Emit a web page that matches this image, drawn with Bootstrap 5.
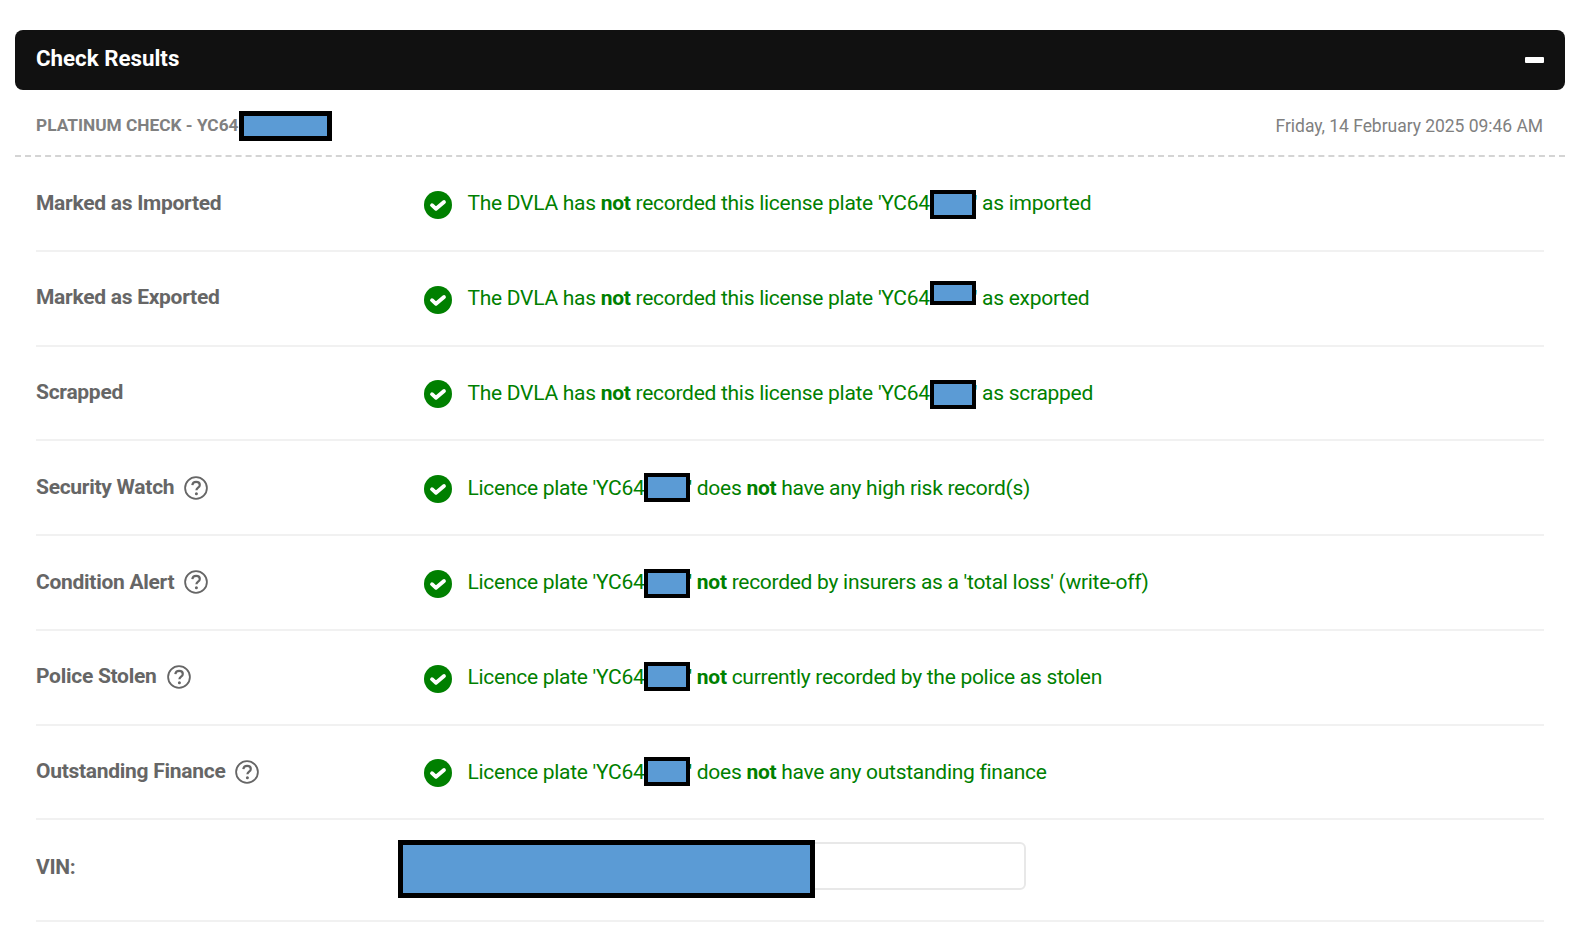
<!DOCTYPE html>
<html lang="en">
<head>
  <meta charset="UTF-8" />
  <meta name="viewport" content="width=device-width, initial-scale=1.0"/>
  <title>Check Results</title>
  <link href="https://cdn.jsdelivr.net/npm/bootstrap@5.3.0/dist/css/bootstrap.min.css" rel="stylesheet"/>
  <style>
    body {
      font-family: Roboto, "Liberation Sans", sans-serif;
      background: #fff;
      padding: 30px 15px 0 15px;
    }
    .results-bar {
      height: 60px;
      padding: 0 21px;
      background: #111;
      border-radius: 8px;
      color: #fff;
      font-size: 22.3px;
      font-weight: 700;
    }
    .results-title { margin-bottom: 2px; }
    .collapse-dash { width: 19px; height: 6px; background: #fff; border-radius: 1px; }
    .check-head {
      height: 67px;
      padding: 7px 22px 0 21px;
      border-bottom: 2px dashed #d4d4d4;
      color: #808080;
    }
    .check-title { font-size: 17.3px; font-weight: 700; }
    .check-date { font-size: 17.5px; letter-spacing: -0.04px; }
    .result-list { padding: 0 21px; }
    .result-row {
      height: 94.75px;
      border-bottom: 2px solid #f1f1f1;
    }
    .result-label {
      width: 388px;
      flex: none;
      font-size: 21px;
      font-weight: 700;
      color: #666;
      letter-spacing: -0.28px;
    }
    .help-icon { width: 24px; height: 24px; margin-left: 10px; }
    .tick-icon { width: 28px; height: 28px; flex: none; margin: 3px 16px 0 0; }
    .result-text { font-size: 21px; color: #008000; line-height: 30px; letter-spacing: -0.28px; margin-left: -0.5px; }
    .redact {
      display: inline-block;
      position: relative;
      z-index: 1;
      width: 46px;
      height: 29px;
      margin: -8px 0;
      vertical-align: middle;
      background: #5b9bd5;
      border: 4px solid #000;
    }
    .redact-short { height: 24px; vertical-align: 8px; }
    .redact-up { top: -2px; }
    .redact-head { width: 93px; height: 30px; border-width: 5px; }
    .apos { margin-left: -2px; }
    .vin-row { height: 101.5px; }
    .vin-label { width: 362px; margin-bottom: 4px; }
    .vin-field {
      width: 628px;
      height: 48px;
      margin-bottom: 9px;
      position: relative;
      border: 2px solid #e8e8e8;
      border-radius: 6px;
    }
    .redact-vin {
      position: absolute;
      left: -2px;
      top: -4px;
      width: 417px;
      height: 58px;
      margin: 0;
      border-width: 5px;
    }
  </style>
</head>
<body>
  <svg class="d-none">
    <symbol id="tick" viewBox="0 0 28 28">
      <circle cx="14" cy="14" r="14" fill="#008000"/>
      <path d="M8 14.2l4 3.6 8-6.8" fill="none" stroke="#fff" stroke-width="3.8" stroke-linecap="round" stroke-linejoin="round"/>
    </symbol>
    <symbol id="help" viewBox="0 0 24 24">
      <circle cx="12" cy="12" r="10.9" fill="none" stroke="#666" stroke-width="1.8"/>
      <path d="M8.3 9.2c.3-2.2 1.9-3.4 3.8-3.4 2.2 0 3.7 1.4 3.7 3.1 0 2.8-3.4 2.7-3.4 5.4" fill="none" stroke="#666" stroke-width="2.2"/>
      <circle cx="12.4" cy="17.8" r="1.5" fill="#666"/>
    </symbol>
  </svg>

  <div class="results-bar d-flex align-items-center justify-content-between">
    <span class="results-title">Check Results</span>
    <span class="collapse-dash"></span>
  </div>

  <div class="check-head d-flex align-items-center justify-content-between">
    <span class="check-title">PLATINUM CHECK - YC64<span class="redact redact-head"></span></span>
    <span class="check-date">Friday, 14 February 2025 09:46 AM</span>
  </div>

  <div class="result-list">
    <div class="result-row d-flex align-items-center">
      <div class="result-label">Marked as Imported</div>
      <svg class="tick-icon"><use href="#tick"/></svg>
      <div class="result-text">The DVLA has <b>not</b> recorded this license plate 'YC64<span class="redact"></span><span class="apos">'</span> as imported</div>
    </div>
    <div class="result-row d-flex align-items-center">
      <div class="result-label">Marked as Exported</div>
      <svg class="tick-icon"><use href="#tick"/></svg>
      <div class="result-text">The DVLA has <b>not</b> recorded this license plate 'YC64<span class="redact redact-short"></span><span class="apos">'</span> as exported</div>
    </div>
    <div class="result-row d-flex align-items-center">
      <div class="result-label">Scrapped</div>
      <svg class="tick-icon"><use href="#tick"/></svg>
      <div class="result-text">The DVLA has <b>not</b> recorded this license plate 'YC64<span class="redact"></span><span class="apos">'</span> as scrapped</div>
    </div>
    <div class="result-row d-flex align-items-center">
      <div class="result-label d-flex align-items-center">Security Watch
        <svg class="help-icon"><use href="#help"/></svg>
      </div>
      <svg class="tick-icon"><use href="#tick"/></svg>
      <div class="result-text">Licence plate 'YC64<span class="redact redact-up"></span><span class="apos">'</span> does <b>not</b> have any high risk record(s)</div>
    </div>
    <div class="result-row d-flex align-items-center">
      <div class="result-label d-flex align-items-center">Condition Alert
        <svg class="help-icon"><use href="#help"/></svg>
      </div>
      <svg class="tick-icon"><use href="#tick"/></svg>
      <div class="result-text">Licence plate 'YC64<span class="redact"></span><span class="apos">'</span> <b>not</b> recorded by insurers as a 'total loss' (write-off)</div>
    </div>
    <div class="result-row d-flex align-items-center">
      <div class="result-label d-flex align-items-center">Police Stolen
        <svg class="help-icon"><use href="#help"/></svg>
      </div>
      <svg class="tick-icon"><use href="#tick"/></svg>
      <div class="result-text">Licence plate 'YC64<span class="redact redact-up"></span><span class="apos">'</span> <b>not</b> currently recorded by the police as stolen</div>
    </div>
    <div class="result-row d-flex align-items-center">
      <div class="result-label d-flex align-items-center">Outstanding Finance
        <svg class="help-icon"><use href="#help"/></svg>
      </div>
      <svg class="tick-icon"><use href="#tick"/></svg>
      <div class="result-text">Licence plate 'YC64<span class="redact redact-up"></span><span class="apos">'</span> does <b>not</b> have any outstanding finance</div>
    </div>
    <div class="result-row vin-row d-flex align-items-center">
      <div class="result-label vin-label">VIN:</div>
      <div class="vin-field"><span class="redact redact-vin"></span></div>
    </div>
  </div>
</body>
</html>
